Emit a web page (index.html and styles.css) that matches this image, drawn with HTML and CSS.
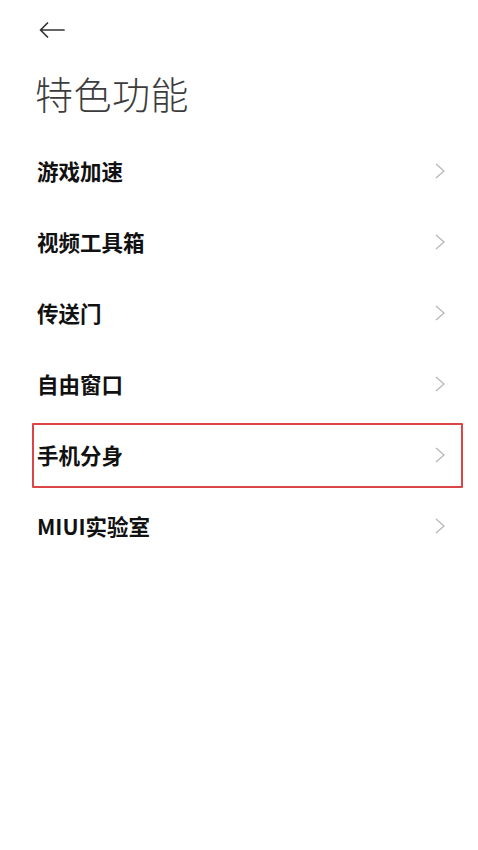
FILE: index.html
```html
<!DOCTYPE html>
<html lang="zh-CN">
<head>
<meta charset="utf-8">
<title>特色功能</title>
<link rel="stylesheet" href="styles.css">
</head>
<body>
<div class="page">
  <div class="topbar">
    <svg class="back" width="26" height="16" viewBox="0 0 26 16"><path d="M8.5 1 L1.5 8 L8.5 15 M1.5 8 H25" fill="none" stroke="#333" stroke-width="1.7" stroke-linecap="round" stroke-linejoin="round"/></svg>
  </div>
  <h1 class="title">特色功能</h1>
  <ul class="list">
    <li class="row"><span class="label">游戏加速</span><svg class="chev" width="10" height="16" viewBox="0 0 10 16"><polyline points="1,1 9,8 1,15" fill="none" stroke="#b8b8b8" stroke-width="1.3"/></svg></li>
    <li class="row"><span class="label">视频工具箱</span><svg class="chev" width="10" height="16" viewBox="0 0 10 16"><polyline points="1,1 9,8 1,15" fill="none" stroke="#b8b8b8" stroke-width="1.3"/></svg></li>
    <li class="row"><span class="label">传送门</span><svg class="chev" width="10" height="16" viewBox="0 0 10 16"><polyline points="1,1 9,8 1,15" fill="none" stroke="#b8b8b8" stroke-width="1.3"/></svg></li>
    <li class="row"><span class="label">自由窗口</span><svg class="chev" width="10" height="16" viewBox="0 0 10 16"><polyline points="1,1 9,8 1,15" fill="none" stroke="#b8b8b8" stroke-width="1.3"/></svg></li>
    <li class="row highlight"><span class="label">手机分身</span><svg class="chev" width="10" height="16" viewBox="0 0 10 16"><polyline points="1,1 9,8 1,15" fill="none" stroke="#b8b8b8" stroke-width="1.3"/></svg></li>
    <li class="row"><span class="label">MIUI实验室</span><svg class="chev" width="10" height="16" viewBox="0 0 10 16"><polyline points="1,1 9,8 1,15" fill="none" stroke="#b8b8b8" stroke-width="1.3"/></svg></li>
  </ul>
</div>
</body>
</html>
```
FILE: styles.css
```css
html, body {
  margin: 0;
  padding: 0;
  background: #ffffff;
}
body {
  font-family: "Noto Sans CJK SC", "Noto Sans", sans-serif;
  width: 478px;
  height: 850px;
}
.page {
  display: flex;
  flex-direction: column;
}
.topbar {
  padding: 22px 0 0 39px;
  height: 16px;
  display: flex;
}
.back {
  display: block;
}
.title {
  margin: 36px 0 0 35px;
  font-size: 38px;
  line-height: 38px;
  height: 38px;
  font-weight: 300;
  color: #3c3c3c;
  letter-spacing: 0.5px;
}
.list {
  list-style: none;
  margin: 23px 15px 0 32px;
  padding: 0;
}
.row {
  position: relative;
  height: 71px;
  display: flex;
  align-items: center;
  justify-content: space-between;
  padding: 0 18px 0 5px;
}
.label {
  font-size: 21.5px;
  line-height: 1;
  font-weight: 700;
  color: #111111;
}
.chev {
  display: block;
}
.highlight::after {
  content: "";
  position: absolute;
  top: 4px;
  bottom: 2px;
  left: 0;
  right: 0;
  border: 2px solid #dc4545;
  border-radius: 1px;
}
```
